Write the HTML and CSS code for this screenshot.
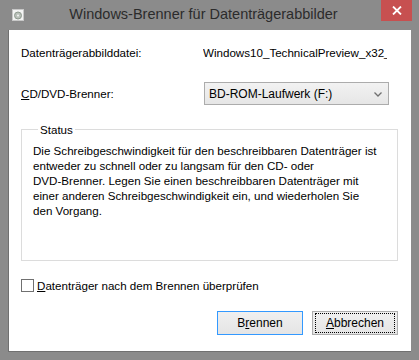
FILE: index.html
```html
<!DOCTYPE html>
<html>
<head>
  <title>Windows-Brenner für Datenträgerabbilder</title>
  <link rel="stylesheet" href="styles.css">
</head>
<body>
  <div class="window">
    <div class="titlebar">
      <span class="app-icon">
        <svg width="12" height="12" viewBox="0 0 12 12">
          <rect x="0.5" y="0.5" width="11" height="11" fill="#f4f4f4" stroke="#c8c8c8"/>
          <circle cx="6" cy="6.5" r="3.5" fill="#b9c0b9" stroke="#8f9a8f"/>
          <circle cx="6" cy="6.5" r="1" fill="#f4f4f4"/>
        </svg>
      </span>
      <span class="title">Windows-Brenner für Datenträgerabbilder</span>
      <span class="close">
        <svg width="10" height="9" viewBox="0 0 10 9">
          <path d="M1 0.5 L9 8.5 M9 0.5 L1 8.5" stroke="#fff" stroke-width="1.8"/>
        </svg>
      </span>
    </div>

    <div class="client">
      <div class="form-row">
        <span class="label">Datenträgerabbilddatei:</span>
        <span class="filename">Windows10_TechnicalPreview_x32_DE.iso</span>
      </div>
      <div class="form-row row-burner">
        <span class="label"><u>C</u>D/DVD-Brenner:</span>
        <div class="select">
          <span>BD-ROM-Laufwerk (F:)</span>
          <svg width="8" height="5" viewBox="0 0 8 5">
            <path d="M0.5 0.5 L4 4 L7.5 0.5" fill="none" stroke="#707070" stroke-width="1.3"/>
          </svg>
        </div>
      </div>

      <fieldset class="status">
        <legend>Status</legend>
        <p>Die Schreibgeschwindigkeit für den beschreibbaren Datenträger ist<br>
        entweder zu schnell oder zu langsam für den CD- oder<br>
        DVD-Brenner. Legen Sie einen beschreibbaren Datenträger mit<br>
        einer anderen Schreibgeschwindigkeit ein, und wiederholen Sie<br>
        den Vorgang.</p>
      </fieldset>

      <label class="check">
        <span class="box"></span>
        <span><u>D</u>atenträger nach dem Brennen überprüfen</span>
      </label>

      <div class="buttons">
        <button class="btn default">B<u>r</u>ennen</button>
        <button class="btn focused"><span class="focus-rect"><u>A</u>bbrechen</span></button>
      </div>
    </div>
  </div>
</body>
</html>
```

FILE: styles.css
```css
body {
  margin: 0;
  font-family: "Liberation Sans", Arial, sans-serif;
  font-size: 11.6px;
  color: #000;
}

.window {
  width: 419px;
  height: 360px;
  background-color: #8b8b8b;
  display: flex;
  flex-direction: column;
}

.titlebar {
  height: 30px;
  position: relative;
  display: flex;
  align-items: flex-start;
  justify-content: center;
}

.app-icon {
  position: absolute;
  left: 12px;
  top: 9px;
  width: 12px;
  height: 12px;
}

.title {
  font-size: 14.5px;
  color: #2b2b2b;
  margin-top: 6px;
  margin-right: 12px;
}

.close {
  position: absolute;
  left: 381px;
  top: 0;
  width: 31px;
  height: 21px;
  background-color: #c75050;
  display: flex;
  align-items: center;
  justify-content: center;
}

.client {
  flex: 1;
  margin: 0 8px 8px 8px;
  background-color: #fff;
  border-left: 1px solid #707070;
  border-bottom: 1px solid #707070;
  display: flex;
  flex-direction: column;
  padding: 0 12px 0 12px;
}

.form-row {
  display: flex;
  align-items: center;
  height: 23px;
}

.form-row:first-child {
  margin-top: 11px;
}

.row-burner {
  margin-top: 18px;
}

.label {
  width: 182px;
  flex-shrink: 0;
}

.filename {
  width: 184px;
  overflow: hidden;
  white-space: nowrap;
}

.select {
  width: 173px;
  height: 21px;
  border: 1px solid #acacac;
  background: linear-gradient(#f2f2f2, #e6e6e6);
  display: flex;
  align-items: center;
  justify-content: space-between;
  padding: 0 6px 0 4px;
  box-sizing: content-box;
  margin-left: 1px;
  font-size: 12px;
}

.select svg {
  margin-top: 1px;
}

.status {
  margin: 18px 1px 0 0;
  padding: 0 10px 0 11px;
  height: 136px;
  border: 1px solid #dcdcdc;
}

.status legend {
  padding: 0 2px;
  margin-left: 5px;
}

.status p {
  margin: 7px 0 0 0;
  line-height: 15px;
  white-space: nowrap;
}

.check {
  display: flex;
  align-items: center;
  margin-top: 18px;
}

.check .box {
  width: 11px;
  height: 11px;
  border: 1px solid #707070;
  background-color: #fff;
  margin-right: 3px;
}

.buttons {
  display: flex;
  justify-content: flex-end;
  gap: 9px;
  margin-top: 19px;
  padding-right: 1px;
}

.btn {
  width: 86px;
  height: 24px;
  font-family: inherit;
  font-size: 12px;
  color: #000;
  background: linear-gradient(#f0f0f0, #e5e5e5);
  border: 1px solid #adadad;
  padding: 0;
}

.btn.default {
  border-color: #3399ff;
}

.focus-rect {
  display: flex;
  align-items: center;
  justify-content: center;
  height: 18px;
  margin: 0 2px;
  border: 1px dotted #000;
}
```
